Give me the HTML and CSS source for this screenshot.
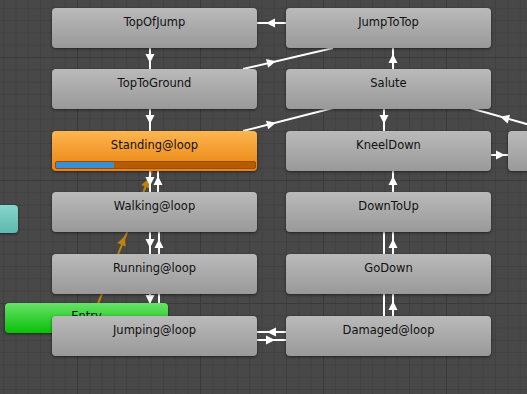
FILE: index.html
```html
<!DOCTYPE html>
<html lang="en">
<head>
  <meta charset="UTF-8" />
  <title>Animator</title>
  <link rel="stylesheet" href="styles.css">
</head>
<body>
  <div id="graph">
    <!-- transitions, drawn under the states -->
    <svg class="links" width="527" height="394" viewBox="0 0 527 394">
      <defs>
        <path id="head" d="M5,0 L-4,-4.5 L-4,4.5 Z" />
      </defs>
      <g class="entry-link">
        <line x1="97" y1="306" x2="152" y2="171" />
        <use href="#head" transform="translate(123,241) rotate(-67.8)" />
        <use href="#head" transform="translate(147,183) rotate(-67.8)" />
      </g>
      <g class="link">
        <line x1="257" y1="23" x2="286" y2="23" />
        <use href="#head" transform="translate(271,23) rotate(180)" />

        <line x1="150" y1="48" x2="150" y2="69" />
        <use href="#head" transform="translate(150,58) rotate(90)" />
        <line x1="150" y1="109" x2="150" y2="131" />
        <use href="#head" transform="translate(150,119) rotate(90)" />

        <line x1="243" y1="69" x2="333" y2="48" />
        <use href="#head" transform="translate(271,62.5) rotate(-13.1)" />
        <line x1="243" y1="131" x2="333" y2="108" />
        <use href="#head" transform="translate(271,124) rotate(-14.3)" />

        <line x1="393" y1="48" x2="393" y2="69" />
        <use href="#head" transform="translate(393,59) rotate(-90)" />
        <line x1="384" y1="109" x2="384" y2="131" />
        <use href="#head" transform="translate(384,119) rotate(90)" />

        <line x1="470" y1="108" x2="530" y2="125" />
        <use href="#head" transform="translate(505,118) rotate(-164.3)" />
        <line x1="491" y1="155" x2="508" y2="155" />
        <use href="#head" transform="translate(500,155)" />

        <line x1="393" y1="171" x2="393" y2="192" />
        <use href="#head" transform="translate(393,181) rotate(-90)" />
        <line x1="384" y1="232" x2="384" y2="254" />
        <line x1="393" y1="232" x2="393" y2="254" />
        <use href="#head" transform="translate(393,244) rotate(-90)" />
        <line x1="384" y1="294" x2="384" y2="316" />
        <line x1="393" y1="294" x2="393" y2="316" />
        <use href="#head" transform="translate(393,306) rotate(-90)" />

        <line x1="257" y1="332" x2="286" y2="332" />
        <use href="#head" transform="translate(272,332) rotate(180)" />
        <line x1="257" y1="340" x2="286" y2="340" />
        <use href="#head" transform="translate(270,340)" />

        <line x1="150" y1="171" x2="150" y2="192" />
        <line x1="158" y1="171" x2="158" y2="192" />
        <use href="#head" transform="translate(150,181) rotate(90)" />
        <use href="#head" transform="translate(158,181) rotate(-90)" />
        <line x1="150" y1="232" x2="150" y2="254" />
        <line x1="159" y1="232" x2="159" y2="254" />
        <use href="#head" transform="translate(150,243) rotate(90)" />
        <use href="#head" transform="translate(159,244) rotate(-90)" />
        <line x1="150" y1="294" x2="150" y2="316" />
        <line x1="159" y1="294" x2="159" y2="316" />
        <use href="#head" transform="translate(150,299) rotate(90)" />
      </g>
    </svg>

    <!-- states that sit mostly off screen: their labels are out of view -->
    <div class="node any"></div>
    <div class="node col-c row-3"></div>

    <div class="node entry">Entry</div>

    <div class="node col-a row-1">TopOfJump</div>
    <div class="node col-a row-2">TopToGround</div>
    <div class="node active col-a row-3">
      Standing@loop
      <div class="progress"><div class="progress-fill" style="width: 29%"></div></div>
    </div>
    <div class="node col-a row-4">Walking@loop</div>
    <div class="node col-a row-5">Running@loop</div>
    <div class="node col-a row-6">Jumping@loop</div>

    <div class="node col-b row-1">JumpToTop</div>
    <div class="node col-b row-2">Salute</div>
    <div class="node col-b row-3">KneelDown</div>
    <div class="node col-b row-4">DownToUp</div>
    <div class="node col-b row-5">GoDown</div>
    <div class="node col-b row-6">Damaged@loop</div>
  </div>
</body>
</html>
```

FILE: styles.css
```css
* { margin: 0; padding: 0; box-sizing: border-box; }

body {
  background: #474747;
  font-family: "DejaVu Sans", Verdana, sans-serif;
}

#graph {
  position: relative;
  width: 527px;
  height: 394px;
  overflow: hidden;
  background-color: #484848;
  background-image:
    linear-gradient(#3a3a3a 1px, transparent 1px),
    linear-gradient(90deg, #3a3a3a 1px, transparent 1px),
    linear-gradient(#414141 1px, transparent 1px),
    linear-gradient(90deg, #414141 1px, transparent 1px);
  background-size: 123px 123px, 123px 123px, 12.3px 12.3px, 12.3px 12.3px;
  background-position: 0 57px, 77px 0, 0 57px, 77px 0;
}

.links {
  position: absolute;
  left: 0;
  top: 0;
}

.link line {
  stroke: #fff;
  stroke-width: 2;
}

.link use {
  fill: #fff;
}

.entry-link line {
  stroke: #c0820f;
  stroke-width: 2;
}

.entry-link use {
  fill: #c0820f;
}

/* states */
.node {
  position: absolute;
  width: 205px;
  height: 40px;
  padding-top: 8px;
  border-radius: 4px;
  background: linear-gradient(#bababa, #999);
  box-shadow: 0 1px 3px rgba(0, 0, 0, 0.55);
  color: #111;
  font-size: 11.5px;
  line-height: 13px;
  text-align: center;
  white-space: nowrap;
}

.col-a { left: 52px; }
.col-b { left: 286px; }
.col-c { left: 508px; }

.row-1 { top: 8px; }
.row-2 { top: 69px; }
.row-3 { top: 131px; }
.row-4 { top: 192px; }
.row-5 { top: 254px; }
.row-6 { top: 316px; }

.active {
  background: linear-gradient(#fdb650, #e9820e);
}

.progress {
  position: absolute;
  left: 3px;
  right: 1px;
  bottom: 2px;
  height: 8px;
  background: #b65c00;
  border: 1px solid #9a4c00;
  border-radius: 2px;
}

.progress-fill {
  height: 100%;
  background: #3a90d6;
  border-radius: 1px;
}

.any {
  left: -187px;
  top: 205px;
  height: 28px;
  background: linear-gradient(#86d6cc, #5fb7ad);
}

.entry {
  left: 5px;
  top: 303px;
  width: 163px;
  height: 30px;
  padding-top: 7px;
  background: linear-gradient(#66e266, #0ac00a);
}
```
